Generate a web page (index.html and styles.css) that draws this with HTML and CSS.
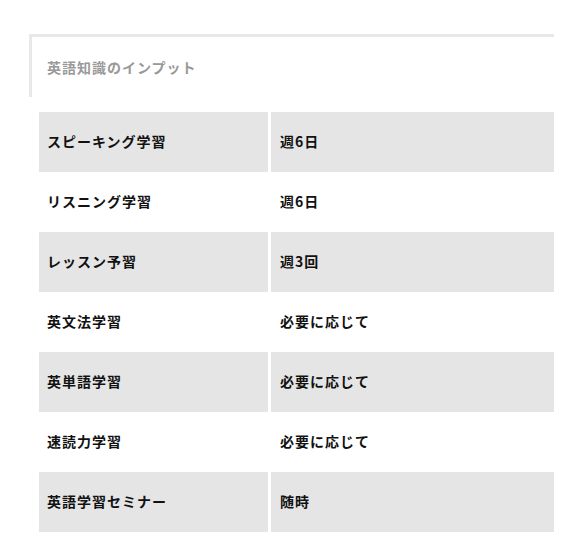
FILE: index.html
```html
<!DOCTYPE html>
<html lang="ja">
<head>
<meta charset="utf-8">
<link rel="stylesheet" href="styles.css">
</head>
<body>
<div class="wrap">
  <div class="heading">英語知識のインプット</div>
  <div class="table">
    <div class="row gray"><div class="cell">スピーキング学習</div><div class="cell">週6日</div></div>
    <div class="row"><div class="cell">リスニング学習</div><div class="cell">週6日</div></div>
    <div class="row gray"><div class="cell">レッスン予習</div><div class="cell">週3回</div></div>
    <div class="row"><div class="cell">英文法学習</div><div class="cell">必要に応じて</div></div>
    <div class="row gray"><div class="cell">英単語学習</div><div class="cell">必要に応じて</div></div>
    <div class="row"><div class="cell">速読力学習</div><div class="cell">必要に応じて</div></div>
    <div class="row gray"><div class="cell">英語学習セミナー</div><div class="cell">随時</div></div>
  </div>
</div>
</body>
</html>
```
FILE: styles.css
```css
html, body {
  margin: 0;
  padding: 0;
  background: #fff;
}
body {
  font-family: "Noto Sans CJK JP", "Noto Sans", sans-serif;
  font-weight: bold;
  font-size: 14px;
  letter-spacing: 1px;
  color: #111;
}
.wrap {
  padding: 34px 29px 0 29px;
}
.heading {
  border-top: 3px solid #e8e8e8;
  border-left: 3px solid #e8e8e8;
  padding: 20px 15px;
  line-height: 20px;
  color: #999;
}
.table {
  margin: 15px 0 0 10px;
}
.row {
  display: grid;
  grid-template-columns: 229px 1fr;
  column-gap: 3px;
  height: 60px;
}
.cell {
  display: flex;
  align-items: center;
  padding-left: 8px;
  padding-bottom: 2px;
}
.row .cell + .cell {
  padding-left: 9px;
}
.row.gray .cell {
  background: #e5e5e5;
}
```
